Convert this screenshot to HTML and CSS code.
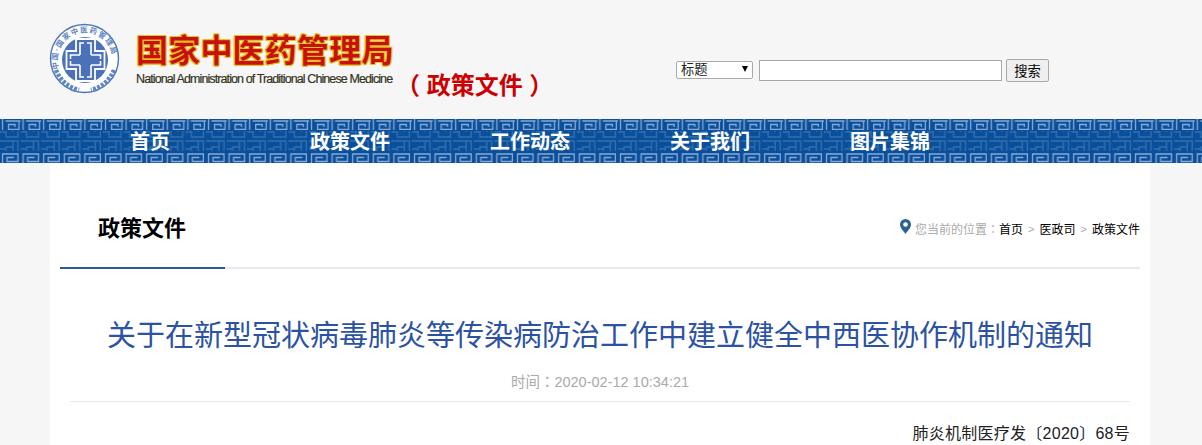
FILE: index.html
```html
<!DOCTYPE html>
<html lang="zh-CN">
<head>
    <meta charset="UTF-8">
    <meta name="viewport" content="width=device-width, initial-scale=1.0">
    <title>关于在新型冠状病毒肺炎等传染病防治工作中建立健全中西医协作机制的通知</title>
    <link rel="stylesheet" href="styles.css">
</head>
<body>
    <header class="top">
      <svg class="emblem" width="72" height="72" viewBox="0 0 72 72">
        <defs>
          <path id="ring" d="M10 46 A27.5 27.5 0 1 1 62 46"/>
        </defs>
        <circle cx="35.5" cy="35.5" r="34" fill="#fff" stroke="#4a74b8" stroke-width="1.4"/>
        <circle cx="36" cy="37" r="23" fill="#4b72b8"/>
        <text class="emblem-text"><textPath href="#ring" textLength="90">中国·国家中医药管理局</textPath></text>
        <path d="M27 28V16H46V28H55.5V46H46V58H27V46H17.5V28Z" fill="none" stroke="#fff" stroke-width="1.8"/>
        <path d="M31 32V20H35M42 32V20H38M31 42V54H35M42 42V54H38M31 32H21.5V36M42 32H51.5V36M31 42H21.5V38M42 42H51.5V38" fill="none" stroke="#fff" stroke-width="1.6"/>
        <path d="M7 47C11 57 19 64 30 67M65 47C61 57 53 64 42 67" fill="none" stroke="#5f86c2" stroke-width="4.5" stroke-dasharray="3 1.4"/>
      </svg>
      <div class="brand">
        <div class="brand-cn">国家中医药管理局</div>
        <div class="brand-en">National Administration of Traditional Chinese Medicine</div>
      </div>
      <div class="section-tag">（ 政策文件 ）</div>
      <form class="search">
        <span class="select-wrap">
          <select class="search-type"><option>标题</option></select>
        </span>
        <input class="search-input" type="text">
        <button class="search-btn" type="button">搜索</button>
      </form>
    </header>

    <nav class="nav">
      <svg class="nav-bg" width="100%" height="44">
        <defs>
          <pattern id="keyTop" width="20.6" height="11" patternUnits="userSpaceOnUse">
            <path d="M2.5 0V11M5.5 2H20.6M19 2V10.5H8.5V5.5H15V8" fill="none" stroke="#86a9d6" stroke-width="1.3"/>
          </pattern>
          <pattern id="keyMid" width="20.6" height="20" patternUnits="userSpaceOnUse">
            <path d="M0 2H18V18H6V8H13V13M0 10H6M13 2V8M6 18V13H0" fill="none" stroke="#2f6fb0" stroke-width="1.4"/>
          </pattern>
          <pattern id="keyBot" width="20.6" height="11" patternUnits="userSpaceOnUse">
            <path d="M2.5 11V2H18V9.5H7V5.5H14" fill="none" stroke="#86a9d6" stroke-width="1.3"/>
          </pattern>
        </defs>
        <rect width="100%" height="44" fill="#0b4f9a"/>
        <rect width="100%" height="11" fill="url(#keyTop)"/>
        <rect y="12" width="100%" height="20" fill="url(#keyMid)"/>
        <rect y="33" width="100%" height="11" fill="url(#keyBot)"/>
      </svg>
      <a class="nav-item">首页</a>
      <a class="nav-item">政策文件</a>
      <a class="nav-item">工作动态</a>
      <a class="nav-item">关于我们</a>
      <a class="nav-item">图片集锦</a>
    </nav>

    <main class="content">
      <div class="crumb-bar">
        <h2 class="crumb-title">政策文件</h2>
        <div class="crumbs">
          <svg class="pin" width="11" height="15" viewBox="0 0 11 15">
            <path d="M5.5 0A5.5 5.5 0 0 0 0 5.5C0 9 3.5 12 5.5 15 7.5 12 11 9 11 5.5A5.5 5.5 0 0 0 5.5 0zm0 3.2a2.3 2.3 0 1 1 0 4.6 2.3 2.3 0 0 1 0-4.6z" fill="#2d6392"/>
          </svg>
          <span class="crumb-label">您当前的位置<span class="tc" lang="zh-TW">：</span></span><span>首页</span><span class="crumb-sep">&gt;</span><span>医政司</span><span class="crumb-sep">&gt;</span><span>政策文件</span>
        </div>
      </div>
      <h1 class="article-title">关于在新型冠状病毒肺炎等传染病防治工作中建立健全中西医协作机制的通知</h1>
      <p class="article-time">时间<span class="tc" lang="zh-TW">：</span>2020-02-12 10:34:21</p>
      <p class="doc-no">肺炎机制医疗发〔2020〕68号</p>
    </main>
</body>
</html>
```
FILE: styles.css
```css
html {
  height: 100%;
  overflow: hidden;
}

body {
  margin: 0;
  background-color: #f6f6f6;
  font-family: "Liberation Sans", "Noto Sans CJK SC", sans-serif;
  color: #000;
}

.tc {
  font-family: "Noto Sans CJK TC", sans-serif;
}

.top {
  display: flex;
  height: 119px;
  padding-left: 49px;
  box-sizing: border-box;
}

.emblem {
  margin-top: 23px;
  flex: none;
}

.emblem-text {
  font-size: 7.5px;
  font-weight: bold;
  fill: #5f86c2;
}

.brand {
  width: 272px;
  margin-left: 15px;
  padding-top: 31px;
  flex: none;
}

.brand-cn {
  font-size: 32px;
  line-height: 40px;
  font-weight: bold;
  letter-spacing: 0.2px;
  color: #c8110f;
  text-shadow: 1px 0 #e6c21e, -1px 0 #e6c21e, 0 1px #e6c21e, 0 -1px #e6c21e, 1px 1px #e6c21e, -1px -1px #e6c21e, 1px -1px #e6c21e, -1px 1px #e6c21e;
  white-space: nowrap;
}

.brand-en {
  font-size: 12.5px;
  line-height: 16px;
  letter-spacing: -0.9px;
  color: #332;
  -webkit-text-stroke: 0.2px #332;
  white-space: nowrap;
}

.section-tag {
  margin-top: 68px;
  margin-left: -12px;
  width: 150px;
  flex: none;
  font-size: 24px;
  line-height: 36px;
  font-weight: bold;
  color: #c00;
  white-space: nowrap;
}

.search {
  display: flex;
  align-items: center;
  gap: 4px;
  margin-left: 130px;
  margin-top: 59px;
  height: 23px;
}

.select-wrap {
  position: relative;
  display: block;
  height: 18px;
  margin-top: -2px;
  margin-right: 2px;
}

.select-wrap::after {
  content: "";
  position: absolute;
  right: 5px;
  top: 5px;
  border-style: solid;
  border-width: 6px 3.5px 0;
  border-color: #000 transparent transparent;
}

.search-type {
  display: block;
  width: 77px;
  height: 18px;
  padding: 0 0 0 4px;
  appearance: none;
  font-size: 13.3px;
  font-family: inherit;
  background-color: #fff;
  border: 1px solid #a9a9a9;
  border-radius: 2px;
  color: #222;
}

.search-input {
  width: 243px;
  height: 21px;
  padding: 0;
  box-sizing: border-box;
  border: 1px solid #a9a9a9;
  background-color: #fff;
}

.search-btn {
  width: 43px;
  height: 23px;
  padding: 0;
  font-size: 13.3px;
  font-family: inherit;
  background-color: #efefef;
  border: 1px solid #a9a9a9;
  border-radius: 2px;
}

.nav {
  position: relative;
  display: flex;
  height: 44px;
  padding-left: 130px;
}

.nav-bg {
  position: absolute;
  top: 0;
  left: 0;
}

.nav-item {
  position: relative;
  width: 180px;
  font-size: 20px;
  line-height: 46px;
  font-weight: bold;
  color: #fff;
}

.content {
  margin: 0 52px 0 50px;
  padding: 0 10px;
  background-color: #fff;
  height: 282px;
}

.crumb-bar {
  display: flex;
  justify-content: space-between;
  align-items: center;
  height: 104px;
  border-bottom: 2px solid #e8e8ee;
  position: relative;
}

.crumb-bar::after {
  content: "";
  position: absolute;
  left: 0;
  bottom: -2px;
  width: 165px;
  height: 2px;
  background-color: #2a5aa0;
}

.crumb-title {
  margin: 0 0 0 38px;
  padding-top: 21px;
  font-size: 22px;
  font-weight: bold;
}

.crumbs {
  display: flex;
  align-items: center;
  padding-top: 27px;
  font-size: 12px;
}

.pin {
  margin-right: 4px;
  margin-top: -4px;
}

.crumb-label {
  color: #aaa;
}

.crumb-sep {
  margin: 0 5px;
  color: #aaa;
  font-size: 11px;
}

.article-title {
  margin: 0;
  padding-top: 47px;
  font-size: 29px;
  line-height: 40px;
  font-weight: normal;
  text-align: center;
  color: #2b52a3;
  white-space: nowrap;
}

.article-time {
  margin: 0 10px;
  padding: 15px 0 9px;
  border-bottom: 1px solid #e8e8e8;
  font-size: 14.5px;
  line-height: 20px;
  text-align: center;
  color: #aaa;
}

.doc-no {
  margin: 22px 10px 0;
  font-size: 16px;
  letter-spacing: 0.25px;
  line-height: 20px;
  text-align: right;
  color: #222;
}
```
